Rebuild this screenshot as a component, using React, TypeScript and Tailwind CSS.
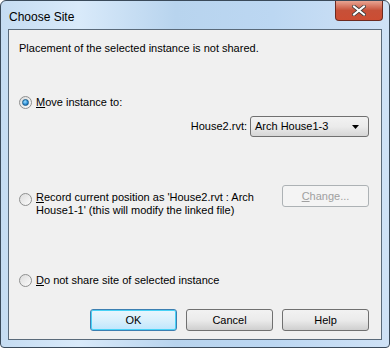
import React from "react";

const Radio = ({ checked }: { checked?: boolean }) => (
  <span className="relative inline-flex h-[13px] w-[13px] shrink-0 items-center justify-center rounded-full border border-[#8e8f8f] bg-gradient-to-br from-[#dcdcdc] to-[#fbfbfb]">
    {checked && (
      <span className="h-[7px] w-[7px] rounded-full border border-[#1a5e8c] bg-[radial-gradient(circle_at_40%_35%,#9ce0ff,#2a8ad4_60%,#0d4d8a)]" />
    )}
  </span>
);

const Button = ({ label, focused, disabled, u }: { label: string; focused?: boolean; disabled?: boolean; u?: boolean }) => (
  <div
    className={`flex h-[22px] w-[87px] items-center justify-center rounded-[3px] border ${
      disabled
        ? "border-[#adb2b5] bg-[#f4f4f4] text-[#a0a0a0]"
        : focused
        ? "border-[#3c7fb1] bg-gradient-to-b from-[#eaf6fd] via-[#d9f0fc] to-[#bee6fd] shadow-[inset_0_0_0_1px_#48d2f6]"
        : "border-[#707070] bg-gradient-to-b from-[#f2f2f2] via-[#ebebeb] to-[#cfcfcf]"
    }`}
  >
    {u ? (
      <span>
        <span className="underline">{label[0]}</span>
        {label.slice(1)}
      </span>
    ) : (
      label
    )}
  </div>
);

export default function App() {
  return (
    <div className="h-[348px] w-[390px] bg-white" style={{ fontFamily: '"Liberation Sans", Arial, sans-serif' }}>
      <div className="flex h-[348px] w-[390px] flex-col rounded-t-[6px] rounded-b-[4px] border border-[#3a4a5a] bg-[linear-gradient(90deg,#c5dcf2_0%,#d9eafa_20%,#b8d4ee_45%,#bcd7f2_70%,#cfe2f6_100%)] px-[7px] pb-[7px] text-[11px] text-black">
        <div className="flex h-[28px] items-start justify-between">
          <div className="pl-[1px] pt-[7px] text-[12px] text-black">Choose Site</div>
          <div className="mr-[-1px] flex h-[20px] w-[48px] items-center justify-center rounded-b-[4px] border border-t-0 border-[#6d2a20] bg-gradient-to-b from-[#e8a493] via-[#c75038] to-[#cc4d33]">
            <svg width="14" height="11" viewBox="0 0 14 11">
              <path d="M2 1.5 L12 9.5 M12 1.5 L2 9.5" stroke="#3b3b3b" strokeWidth="3.6" strokeLinecap="square" />
              <path d="M2 1.5 L12 9.5 M12 1.5 L2 9.5" stroke="#ffffff" strokeWidth="2" strokeLinecap="square" />
            </svg>
          </div>
        </div>
        <div className="flex flex-1 flex-col border border-[#5a6a7a] bg-[#f0f0f0] pl-[10px] pr-[12px]">
          <div className="pt-[11px] leading-[15px]">Placement of the selected instance is not shared.</div>

          <div className="mt-[39px] flex items-center gap-[4px] leading-[15px]">
            <Radio checked />
            <span>
              <span className="underline">M</span>ove instance to:
            </span>
          </div>
          <div className="mt-[6px] flex items-center justify-end gap-[3px]">
            <span>House2.rvt:</span>
            <div className="flex h-[21px] w-[119px] items-center justify-between rounded-[3px] border border-[#707070] bg-gradient-to-b from-[#f2f2f2] via-[#ebebeb] to-[#d6d6d6] pl-[4px] pr-[8px]">
              <span>Arch House1-3</span>
              <svg width="8" height="4" viewBox="0 0 8 4">
                <path d="M0 0 H7 L3.5 4 Z" fill="#000" />
              </svg>
            </div>
          </div>

          <div className="mt-[54px] flex items-start justify-between">
            <div className="flex items-start gap-[4px] leading-[13px]">
              <span className="mt-[2px]">
                <Radio />
              </span>
              <span>
                <span className="underline">R</span>ecord current position as 'House2.rvt : Arch
                <br />
                House1-1' (this will modify the linked file)
              </span>
            </div>
            <div className="-mt-[6px]">
              <Button label="Change..." disabled u />
            </div>
          </div>

          <div className="mt-[56px] flex items-center gap-[4px] leading-[15px]">
            <Radio />
            <span>
              <span className="underline">D</span>o not share site of selected instance
            </span>
          </div>

          <div className="mt-[21px] flex justify-end gap-[9px]">
            <Button label="OK" focused />
            <Button label="Cancel" />
            <Button label="Help" />
          </div>
        </div>
      </div>
    </div>
  );
}
